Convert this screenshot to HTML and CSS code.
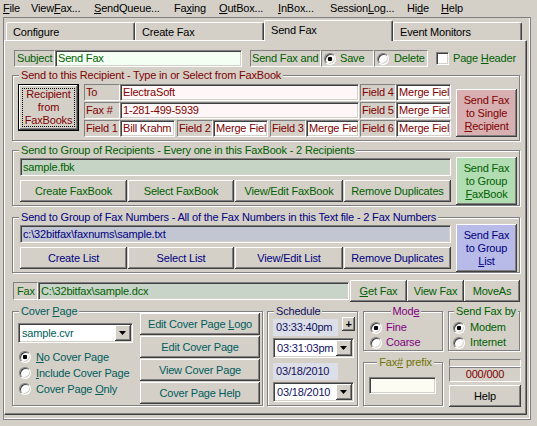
FILE: index.html
```html
<!DOCTYPE html>
<html>
<head>
<meta charset="utf-8">
<title>Send Fax</title>
<link rel="stylesheet" href="styles.css">
</head>
<body>
<nav class="menubar">
  <span><u>F</u>ile</span><span>View<u>F</u>ax...</span><span><u>S</u>endQueue...</span><span>Fa<u>x</u>ing</span><span><u>O</u>utBox...</span><span><u>I</u>nBox...</span><span>Session<u>L</u>og...</span><span>Hi<u>d</u>e</span><span><u>H</u>elp</span>
</nav>
<div class="frame">
  <div class="tabs">
    <div class="tab">Configure</div>
    <div class="tab">Create Fax</div>
    <div class="tab active">Send Fax</div>
    <div class="tab tab-last">Event Monitors</div>
  </div>
  <div class="panel">
    <div class="subject-row c-green">
      <div class="lbl subj-lbl">Subject</div>
      <div class="edit subj-edit">Send Fax</div>
      <div class="lbl sendand">Send Fax and</div>
      <div class="lbl opt opt-save"><span class="radio on"></span><span>Save</span></div>
      <div class="lbl opt opt-delete"><span class="radio"></span><span>Delete</span></div>
      <span class="check"></span>
      <span class="check-text">Page <u>H</u>eader</span>
    </div>

    <fieldset class="group g1 c-red">
      <legend>Send to this Recipient - Type in or Select from FaxBook</legend>
      <div class="g1-body">
        <button class="btn btn-default recip-btn"><span class="focus">Recipient<br>from<br>FaxBooks</span></button>
        <div class="rgrid">
          <div class="rrow"><div class="lbl flbl">To</div><div class="edit fedit pink w239">ElectraSoft</div></div>
          <div class="rrow"><div class="lbl flbl">Fax #</div><div class="edit fedit pink w239">1-281-499-5939</div></div>
          <div class="rrow"><div class="lbl flbl">Field 1</div><div class="edit fedit w55">Bill Krahm</div><div class="lbl flbl ml2">Field 2</div><div class="edit fedit w55">Merge Fiel</div><div class="lbl flbl ml2">Field 3</div><div class="edit fedit w53">Merge Fiel</div></div>
        </div>
        <div class="rgrid col2">
          <div class="rrow"><div class="lbl flbl">Field 4</div><div class="edit fedit w55">Merge Fiel</div></div>
          <div class="rrow"><div class="lbl flbl">Field 5</div><div class="edit fedit w55">Merge Fiel</div></div>
          <div class="rrow"><div class="lbl flbl">Field 6</div><div class="edit fedit w55">Merge Fiel</div></div>
        </div>
        <button class="btn send send-red single"><span>Send Fax<br>to Single<br><u>R</u>ecipient</span></button>
      </div>
    </fieldset>

    <fieldset class="group g2 c-green">
      <legend>Send to Group of Recipients - Every one in this FaxBook - 2 Recipients</legend>
      <div class="gbody">
        <div class="gleft">
          <div class="edit gedit fbk">sample.fbk</div>
          <div class="gbtns">
            <button class="btn b107">Create FaxBook</button><button class="btn b106">Select FaxBook</button><button class="btn b108">View/Edit FaxBook</button><button class="btn b107">Remove Duplicates</button>
          </div>
        </div>
        <button class="btn send send-green"><span>Send Fax<br>to Group<br><u>F</u>axBook</span></button>
      </div>
    </fieldset>

    <fieldset class="group g3 c-navy">
      <legend>Send to Group of Fax Numbers - All of the Fax Numbers in this Text file - 2 Fax Numbers</legend>
      <div class="gbody">
        <div class="gleft">
          <div class="edit gedit txt">c:\32bitfax\faxnums\sample.txt</div>
          <div class="gbtns">
            <button class="btn b107">Create List</button><button class="btn b106">Select List</button><button class="btn b108">View/Edit List</button><button class="btn b107">Remove Duplicates</button>
          </div>
        </div>
        <button class="btn send send-blue"><span>Send Fax<br>to Group<br><u>L</u>ist</span></button>
      </div>
    </fieldset>

    <div class="faxrow c-green">
      <div class="lbl faxlbl">Fax</div>
      <div class="edit faxedit">C:\32bitfax\sample.dcx</div>
      <button class="btn fb57 first"><span><u>G</u>et Fax</span></button><button class="btn fb57">View Fax</button><button class="btn fb56">MoveAs</button>
    </div>

    <div class="bottom">
      <fieldset class="group cover c-teal">
        <legend>Cover <u>P</u>age</legend>
        <div class="cover-body">
          <div class="cover-left">
            <div class="combo cover-combo"><span class="combo-text">sample.cvr</span><span class="combo-btn"><svg width="7" height="4" viewBox="0 0 7 4"><polygon points="0,0 7,0 3.5,4" fill="#000"/></svg></span></div>
            <div class="radios">
              <div class="rad"><span class="radio on"></span><span><u>N</u>o Cover Page</span></div>
              <div class="rad"><span class="radio"></span><span><u>I</u>nclude Cover Page</span></div>
              <div class="rad"><span class="radio"></span><span>Cover Page <u>O</u>nly</span></div>
            </div>
          </div>
          <div class="cover-btns">
            <button class="btn cbtn"><span>Edit Cover Page <u>L</u>ogo</span></button>
            <button class="btn cbtn">Edit Cover Page</button>
            <button class="btn cbtn">View Cover Page</button>
            <button class="btn cbtn">Cover Page Help</button>
          </div>
        </div>
      </fieldset>

      <fieldset class="group sched c-sched">
        <legend>Schedule</legend>
        <div class="sched-row">
          <div class="disp">03:33:40pm</div>
          <button class="btn plus">+</button>
        </div>
        <div class="combo sched-combo"><span class="combo-text">03:31:03pm</span><span class="combo-btn"><svg width="7" height="4" viewBox="0 0 7 4"><polygon points="0,0 7,0 3.5,4" fill="#000"/></svg></span></div>
        <div class="disp date">03/18/2010</div>
        <div class="combo sched-combo date"><span class="combo-text">03/18/2010</span><span class="combo-btn"><svg width="7" height="4" viewBox="0 0 7 4"><polygon points="0,0 7,0 3.5,4" fill="#000"/></svg></span></div>
      </fieldset>

      <div class="rightcol">
        <div class="rc-top">
          <fieldset class="group mode c-purple">
            <legend class="center">Mod<u>e</u></legend>
            <div class="rad2"><span class="radio on"></span><span>Fine</span></div>
            <div class="rad2"><span class="radio"></span><span>Coarse</span></div>
          </fieldset>
          <fieldset class="group sendby c-green">
            <legend class="center">Send Fax by</legend>
            <div class="rad2"><span class="radio on"></span><span>Modem</span></div>
            <div class="rad2"><span class="radio"></span><span>Internet</span></div>
          </fieldset>
        </div>
        <div class="rc-bottom">
          <fieldset class="group prefix c-olive">
            <legend class="center">Fax<u>#</u> prefix</legend>
            <div class="edit prefix-edit"></div>
          </fieldset>
          <div class="status">
            <div class="sunk progress"></div>
            <div class="sunk counter c-red">000/000</div>
            <button class="btn helpbtn c-navy">Help</button>
          </div>
        </div>
      </div>
    </div>
  </div>
</div>
</body>
</html>
```

FILE: styles.css
```css
* { box-sizing: border-box; }
html, body { margin: 0; padding: 0; }
body {
  width: 537px; height: 426px; overflow: hidden;
  background: #d4d0c8;
  font-family: "Liberation Sans", Arial, sans-serif;
  font-size: 11px; line-height: 13px; letter-spacing: -0.18px;
  color: #000;
}
u { text-decoration: underline; }

.c-green { color: #006000; }
.c-red { color: #800000; }
.c-navy { color: #000080; }
.c-purple { color: #800080; }
.c-teal { color: #005c5c; }
.c-olive { color: #707000; }
.c-sched { color: #101060; }

/* menu */
.menubar {
  display: grid;
  grid-template-columns: 28px 63px 80px 45px 59px 52px 77px 34px auto;
  height: 17px; padding-left: 3px; align-items: center; white-space: nowrap;
}

/* window frame + tabs */
.frame {
  margin-left: 3px; width: 528px; height: 403px;
  border: 1px solid #808080;
  box-shadow: inset -1px -1px #fff;
}
.tabs { display: flex; align-items: flex-end; height: 22px; padding-left: 2px; }
.tab {
  width: 129px; height: 18px; flex: none;
  border-top: 1px solid #fff; border-left: 1px solid #fff; border-right: 1px solid #404040;
  box-shadow: inset -1px 0 #808080;
  border-radius: 2px 2px 0 0;
  padding: 3px 0 0 6px; white-space: nowrap;
}
.tab.active {
  height: 21px; margin-bottom: -1px; position: relative; z-index: 1;
  background: #d4d0c8; padding-top: 3px;
}
.panel {
  width: 523px; height: 375px;
  border: 1px solid; border-color: #fff #404040 #404040 #fff;
  box-shadow: inset -1px -1px #808080;
  padding: 9px 5px 0 7px;
}

/* common controls */
.lbl {
  border: 1px solid; border-color: #808080 #fff #fff #808080;
  padding: 0 1px; display: flex; align-items: center; white-space: nowrap; flex: none;
}
.edit {
  height: 18px; flex: none;
  border: 1px solid; border-color: #808080 #fff #fff #808080;
  box-shadow: inset 1px 1px #404040, inset -1px -1px #d4d0c8;
  padding: 0 2px; display: flex; align-items: center;
  white-space: nowrap; overflow: hidden; background: #fff;
}
.btn {
  font: inherit; letter-spacing: inherit; color: inherit;
  margin: 0; padding: 0; border: 0; flex: none;
  background: #d4d0c8;
  box-shadow: inset -1px -1px #404040, inset 1px 1px #fff, inset -2px -2px #808080;
  display: block;
  text-align: center; white-space: nowrap;
}
.radio {
  width: 12px; height: 12px; border-radius: 50%; flex: none;
  background: #fff;
  border: 1px solid; border-color: #808080 #fff #fff #808080;
  box-shadow: inset 1px 1px #404040, inset -1px -1px #d4d0c8;
}
.radio.on { background: radial-gradient(circle, #000 0 2px, #fff 2.6px); }
.check {
  width: 13px; height: 13px; flex: none; background: #fff;
  border: 1px solid; border-color: #808080 #fff #fff #808080;
  box-shadow: inset 1px 1px #404040, inset -1px -1px #d4d0c8;
}
.combo {
  display: flex; height: 20px; background: #fff; flex: none;
  border: 1px solid; border-color: #808080 #fff #fff #808080;
  box-shadow: inset 1px 1px #404040, inset -1px -1px #d4d0c8;
  padding: 1px;
}
.combo-text { flex: 1; padding-left: 2px; display: flex; align-items: center; white-space: nowrap; overflow: hidden; }
.combo-btn {
  width: 16px; flex: none; background: #d4d0c8;
  box-shadow: inset -1px -1px #404040, inset 1px 1px #fff, inset -2px -2px #808080;
  display: flex; align-items: center; justify-content: center;
}
.combo-btn svg { display: block; margin-left: -1px; }
.sunk { border: 1px solid; border-color: #808080 #fff #fff #808080; }

/* group boxes */
.group {
  margin: 0; min-width: 0;
  border: 1px solid #808080;
  box-shadow: 1px 1px 0 #fff, inset 1px 1px 0 #fff;
  padding: 1px 5px 0 5px;
}
.group > legend {
  padding: 0 2px; margin-left: 1px; line-height: 13px;
  background: #d4d0c8; white-space: nowrap;
}
.group > legend.center { margin-left: auto; margin-right: auto; }

/* subject row */
.subject-row { display: flex; align-items: center; height: 17px; margin-left: 2px; }
.subj-lbl { width: 41px; height: 17px; padding-left: 2px; }
.subj-edit { width: 187px; height: 17px; background: #f2fff2; }
.sendand { width: 71px; height: 17px; margin-left: 8px; padding-left: 1px; }
.opt { height: 17px; padding-left: 2px; gap: 4px; }
.opt-save { width: 53px; }
.opt-delete { width: 54px; gap: 5px; }
.subject-row .check { margin-left: 8px; }
.check-text { margin-left: 4px; white-space: nowrap; }

/* group 1 */
.g1 { width: 508px; margin-top: 2px; padding: 2px 5px 3px 5px; }
.g1-body { display: flex; align-items: flex-start; }
.recip-btn {
  width: 61px; height: 47px; margin-right: 5px; padding: 3px;
  border: 1px solid #000; display: flex; align-items: stretch;
}
.recip-btn .focus {
  flex: 1; border: 1px dotted #000;
  display: flex; align-items: center; justify-content: center;
}
.rgrid { display: flex; flex-direction: column; gap: 1px; }
.rgrid.col2 { margin-left: 1px; }
.rrow { display: flex; height: 17px; }
.flbl { width: 36px; height: 17px; }
.fedit { height: 17px; }
.fedit.pink { background: #fff7f7; }
.w239 { width: 239px; }
.w55 { width: 55px; }
.w53 { width: 53px; }
.ml2 { margin-left: 2px; }
.send { width: 61px; height: 48px; margin-left: 5px; margin-top: -1px; white-space: normal; line-height: 13px; }
.send.single { margin-top: 5px; }
.send-red { background: #d8b0b2; }
.send-green { background: #b2dcb2; }
.send-blue { background: #b8bae8; }

/* groups 2 & 3 */
.g2 { width: 508px; margin-top: 3px; }
.g3 { width: 508px; margin-top: 5px; }
.gbody { display: flex; align-items: flex-start; }
.gleft { width: 431px; margin-left: 2px; display: flex; flex-direction: column; gap: 4px; }
.gedit { width: 431px; height: 18px; }
.gedit.fbk { background: #c6d4c6; }
.gedit.txt { background: #c2c6d2; }
.gbtns { display: flex; gap: 1px; }
.gbtns .btn { height: 22px; }
.b106 { width: 106px; }
.b107 { width: 107px; }
.b108 { width: 108px; }

/* fax row */
.faxrow { display: flex; align-items: center; height: 22px; margin: 7px 0 0 1px; }
.faxlbl { width: 25px; height: 18px; padding-left: 3px; }
.faxedit { width: 311px; background: #c8d4c8; }
.faxrow .btn { height: 22px; }
.faxrow .first { margin-left: 1px; }
.fb57 { width: 57px; }
.fb56 { width: 56px; }

/* bottom */
.bottom { display: flex; align-items: flex-start; margin-top: 3px; }
.cover { width: 251px; height: 101px; padding: 0 2px 0 5px; flex: none; }
.cover-body { display: flex; gap: 7px; }
.cover-left { width: 115px; padding-top: 5px; }
.cover-combo { width: 115px; }
.radios { margin-top: 6px; display: flex; flex-direction: column; }
.rad { display: flex; align-items: center; height: 16px; gap: 5px; padding-left: 1px; white-space: nowrap; }
.cover-btns { width: 120px; margin-top: -5px; display: flex; flex-direction: column; gap: 1px; }
.cbtn { width: 120px; height: 22px; }

.sched { width: 91px; height: 101px; margin-left: 4px; padding: 0 0 0 5px; flex: none; }
.sched-row { display: flex; align-items: flex-start; }
.disp { width: 65px; height: 17px; margin-top: 1px; background: #dcdfe8; display: flex; align-items: center; padding-left: 3px; flex: none; }
.disp.date { margin-top: 5px; }
.plus { width: 13px; height: 14px; margin: -1px 0 0 4px; font-weight: bold; color: #000; line-height: 12px; }
.sched-combo { width: 81px; margin-top: 2px; }

.rightcol { width: 158px; margin-left: 5px; flex: none; }
.rc-top { display: flex; align-items: flex-start; }
.mode { width: 80px; height: 46px; padding: 2px 0 0 6px; flex: none; }
.sendby { width: 72px; height: 46px; margin-left: 5px; padding: 2px 0 0 4px; flex: none; }
.rad2 { display: flex; align-items: center; height: 15px; gap: 4px; white-space: nowrap; }
.sendby .rad2 { gap: 5px; }
.rc-bottom { display: flex; align-items: flex-start; margin-top: 5px; }
.prefix { width: 80px; height: 50px; padding: 0 0 0 5px; flex: none; }
.prefix-edit { width: 67px; height: 17px; margin-top: 8px; background: #fcfcf2; }
.status { width: 72px; margin: 3px 0 0 6px; display: flex; flex-direction: column; flex: none; }
.progress { height: 8px; }
.counter { height: 15px; display: flex; align-items: center; justify-content: center; }
.helpbtn { height: 22px; margin-top: 3px; }
```
